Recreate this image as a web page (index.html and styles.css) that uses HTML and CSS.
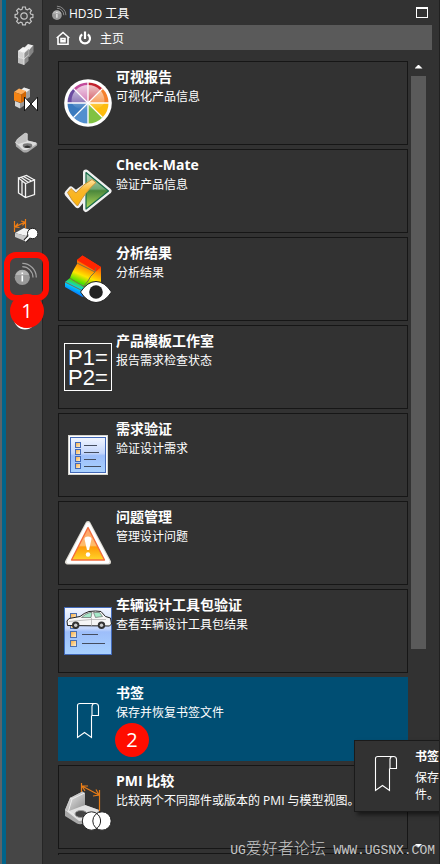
FILE: index.html
```html
<!DOCTYPE html>
<html lang="zh-CN">

<head>
    <meta charset="UTF-8">
    <meta name="viewport" content="width=device-width, initial-scale=1">
    <title>HD3D 工具</title>
    <link rel="stylesheet" href="styles.css">
</head>

<body>

    <!-- 公用图形 -->
    <svg class="defs" width="0" height="0" aria-hidden="true">
        <defs>
            <linearGradient id="metal" x1="0" y1="0" x2="1" y2="1">
                <stop offset="0" stop-color="#f4f4f4" />
                <stop offset="1" stop-color="#8c8c8c" />
            </linearGradient>
            <linearGradient id="sheet" x1="0" y1="0" x2="0" y2="1">
                <stop offset="0" stop-color="#f2f6ff" />
                <stop offset="0.45" stop-color="#c4d6fb" />
                <stop offset="0.52" stop-color="#9dbefa" />
                <stop offset="1" stop-color="#a9d2ff" />
            </linearGradient>
            <linearGradient id="box" x1="0" y1="0" x2="1" y2="1">
                <stop offset="0" stop-color="#f6a93b" />
                <stop offset="1" stop-color="#fff3d8" />
            </linearGradient>
            <symbol id="info" viewBox="0 0 28 28">
                <circle cx="12.3" cy="17.3" r="7.6" fill="#999" />
                <path d="M5.5 15a7.2 7.2 0 0 1 13.6 0z" fill="#b4b4b4" />
                <path d="M12.3 15.6v5.8M12.3 12.4v1.7" stroke="#fff" stroke-width="1.6" />
                <path d="M12.3 3.4A14 14 0 0 1 26.3 17.4M12.3 6.6A10.8 10.8 0 0 1 23 17.4" fill="none" stroke="#a2a2a2" stroke-width="1.2" />
            </symbol>
            <symbol id="bookmark" viewBox="0 0 48 48">
                <path d="M27.5 20.5v22l-7-5-7 5v-32q0-2 2.500-2h15.500q3 0 3 3v9h-6.500v-9q0-3 3-3" fill="none" stroke="#fff" stroke-width="1.1" />
            </symbol>
        </defs>
    </svg>

    <div class="app">
        <!-- 资源条 -->
        <nav class="sidebar">
            <button class="side_btn first" aria-label="设置">
                <svg width="20" height="20" viewBox="0 0 20 20" fill="none" stroke="#c4c4c4" stroke-width="1.200">
                    <path d="M8.600 1h2.800l.5 2.300 1.500.6 2-1.300 2 2-1.300 2 .6 1.500 2.200.5v2.800l-2.200.5-.6 1.500 1.300 2-2 2-2-1.300-1.500.6-.5 2.200H8.600l-.5-2.200-1.500-.6-2 1.300-2-2 1.300-2-.6-1.500-2.200-.5V8.600l2.200-.5.6-1.500-1.300-2 2-2 2 1.300 1.500-.6z" />
                    <circle cx="10" cy="10" r="3.200" />
                </svg>
            </button>
            <button class="side_btn" aria-label="装配导航器">
                <svg width="28" height="28" viewBox="0 0 28 28">
                    <path d="M14 8l4-4 5.500 1.500-4 4.500z" fill="#eee" />
                    <path d="M19.500 10l4-4.500v6.500l-4 5z" fill="#858585" />
                    <path d="M14 8l5.500 2v7L14 15z" fill="#b8b8b8" />
                    <path d="M8 11l5-4 5.500 2-4.500 4z" fill="#f4f4f4" />
                    <path d="M14 13l4.500-4v6.500L14 19z" fill="#909090" />
                    <path d="M8 11l6 2v6l-6-2z" fill="#d2d2d2" />
                    <path d="M8 17l6 2v6l-6-2z" fill="#c2c2c2" />
                    <path d="M14 19l4.500-4V21L14 25z" fill="#8a8a8a" />
                    <path d="M8 11l6 2 4.500-4M14 13v12M8 17l6 2 4.500-4" fill="none" stroke="#f4f4f4" stroke-width=".7" />
                </svg>
            </button>
            <button class="side_btn" aria-label="约束导航器">
                <svg width="28" height="28" viewBox="0 0 28 28">
                    <path d="M11 6l3-2.500 6 2V13l-5 3z" fill="#a0a0a0" />
                    <path d="M11 6l3-2.500 6 2-4 3z" fill="#eee" />
                    <path d="M5 17l5 2v5.500L5 22z" fill="#d5d5d5" />
                    <path d="M10 19l5-3v5l-5 3.500z" fill="#999" />
                    <path d="M4 8l5-3.500 7 2.500-4.500 3.500z" fill="#ffae5b" />
                    <path d="M4 8l7.500 2.500V19L4 16.500z" fill="#f58414" />
                    <path d="M11.500 10.500L16 7v8.500L11.500 19z" fill="#d46600" />
                    <path d="M14.500 13v14l6.500-7zM27.500 13v14L21 20z" fill="#fff" stroke="#151515" />
                </svg>
            </button>
            <button class="side_btn" aria-label="部件导航器">
                <svg width="28" height="28" viewBox="0 0 28 28">
                    <path d="M5.500 14.500l10-2.500L26 14.500q2 1 1 3l-9 6.500q-3 1-5 0l-7-5.500z" fill="#a9a9a9" />
                    <path d="M5.500 14.500l10-2.500L26 14.500q1 1 0 2l-8.500 5q-2.500 1-5 0z" fill="#dcdcdc" />
                    <path d="M5.500 14.500l2-3.500 7-5.500q1.500-.8 2.800.3v8l-9 2.700z" fill="#c2c2c2" stroke="#ededed" stroke-width=".6" />
                    <ellipse cx="17.500" cy="17.700" rx="4.800" ry="2.400" fill="#777" />
                    <path d="M14 19q3-3 7 0-3.500 2-7 0z" fill="#303030" />
                </svg>
            </button>
            <button class="side_btn" aria-label="重用库">
                <svg width="28" height="28" viewBox="0 0 28 28" fill="none" stroke="#f4f4f4" stroke-width="1.300">
                    <path d="M8.500 6v15l7 4.500 9-3V8l-9 3.500zM15.500 11.500v14M8.500 6l8-2.500 8 4.500M11 5.200l7 5M13.500 4.500l8 4.500M12 9v14" />
                </svg>
            </button>
            <button class="side_btn" aria-label="视图管理器">
                <svg width="28" height="28" viewBox="0 0 28 28">
                    <path d="M5 17l9-5 10 3-8 5z" fill="#f2f2f2" />
                    <path d="M5 17l11 3v5.500L5 21z" fill="#c9c9c9" />
                    <path d="M16 20l8-5v4l-8 6.500z" fill="#999" />
                    <path d="M4.500 5v11M15.500 3v9M5 11l10-5M8 7.500L5 11l4.500.5M11 5l4 1-2.500 3.500" fill="none" stroke="#ef7d14" stroke-width="1.200" />
                    <path d="M15 25l5-5" stroke="#202020" stroke-width="4" />
                    <circle cx="22.700" cy="17.500" r="5.200" fill="#fff" stroke="#202020" />
                    <path d="M15 25l5-5" stroke="#fff" stroke-width="2" />
                </svg>
            </button>
            <button class="side_btn marked" aria-label="HD3D 工具">
                <svg width="28" height="28">
                    <use href="#info" />
                </svg>
            </button>
            <button class="side_btn" aria-label="历史记录">
                <svg width="28" height="28" viewBox="0 0 28 28" fill="none" stroke="#fff" stroke-width="2">
                    <circle cx="15" cy="14.500" r="10" />
                    <path d="M15 8v7h5" />
                </svg>
                <span class="step step1">1</span>
            </button>
        </nav>

        <main class="panel">
            <header class="title">
                <svg width="18" height="18">
                    <use href="#info" />
                </svg>
                <h1>HD3D 工具</h1>
                <button class="max_btn" aria-label="最大化"></button>
            </header>

            <div class="toolbar">
                <button aria-label="主页">
                    <svg width="14" height="14" viewBox="0 0 14 14" fill="none" stroke="#fff" stroke-width="1.600">
                        <path d="M.7 7L7 1.500 13.300 7M2 6v7.200h10V6M5 10.800V7.500h4v3.300zM4.500 9.500h5" />
                    </svg>
                </button>
                <button aria-label="退出">
                    <svg width="14" height="14" viewBox="0 0 14 14" fill="none" stroke="#fff" stroke-width="2.200">
                        <path d="M4.200 3.300a5 5 0 1 0 5.600 0M7 .5V8" />
                    </svg>
                </button>
                <span>主页</span>
            </div>

            <div class="content">
                <div class="list">
                    <button class="card">
                        <svg width="48" height="48" viewBox="0 0 48 48">
                            <defs>
                                <linearGradient id="shine" x1="0" y1="0" x2="0" y2="1">
                                    <stop offset="0" stop-color="#fff" stop-opacity=".75" />
                                    <stop offset=".65" stop-color="#fff" stop-opacity=".3" />
                                    <stop offset="1" stop-color="#fff" stop-opacity="0" />
                                </linearGradient>
                            </defs>
                            <circle cx="24" cy="24" r="23.800" fill="#fff" />
                            <path d="M24 24V3.500a20.500 20.500 0 0 1 14.500 6z" fill="#c2202c" />
                            <path d="M24 24L38.500 9.500A20.500 20.500 0 0 1 44.500 24z" fill="#f5802c" />
                            <path d="M24 24h20.500a20.500 20.500 0 0 1-6 14.500z" fill="#fdbc0e" />
                            <path d="M24 24l14.500 14.500a20.500 20.500 0 0 1-14.500 6z" fill="#80c242" />
                            <path d="M24 24v20.500a20.500 20.500 0 0 1-14.500-6z" fill="#528fcf" />
                            <path d="M24 24L9.500 38.500a20.500 20.500 0 0 1-6-14.500z" fill="#397abf" />
                            <path d="M24 24H3.500a20.500 20.500 0 0 1 6-14.500z" fill="#6a4ca0" />
                            <path d="M24 24L9.500 9.500a20.500 20.500 0 0 1 14.500-6z" fill="#c24a9b" />
                            <path d="M24 6c9.500 0 16.500 7 16.500 16 0 5-7 9-16.500 9S7.500 27 7.500 22C7.500 13 14.500 6 24 6z" fill="url(#shine)" />
                            <path d="M24 3v42M3 24h42" stroke="#fff" stroke-width="1.800" opacity=".75" />
                            <path d="M9.500 9.500l29 29M38.500 9.500l-29 29" stroke="#fff" stroke-width="1.200" />
                        </svg>
                        <span class="text"><b>可视报告</b><span>可视化产品信息</span></span>
                    </button>

                    <button class="card">
                        <svg width="48" height="48" viewBox="0 0 48 48" stroke-linejoin="round">
                            <defs>
                                <linearGradient id="go" x1="0" y1="0" x2="0" y2="1">
                                    <stop offset="0" stop-color="#b8d2c0" />
                                    <stop offset=".45" stop-color="#6fa872" />
                                    <stop offset=".5" stop-color="#4b873c" />
                                    <stop offset="1" stop-color="#b5dc57" />
                                </linearGradient>
                                <linearGradient id="tick" x1="0" y1="0" x2="0" y2="1">
                                    <stop offset="0" stop-color="#ffe7a6" />
                                    <stop offset=".4" stop-color="#f8b62d" />
                                    <stop offset="1" stop-color="#fbb30c" />
                                </linearGradient>
                            </defs>
                            <path d="M22 5.500L44.500 24 22 42zM3.500 26.500L7 22.500l5 4L29 14l3 2-18.500 22z" fill="#fff" stroke="#f0f0f0" stroke-width="6" />
                            <path d="M22 5.500L44.500 24 22 42z" fill="url(#go)" stroke="#176b49" stroke-width="1.200" />
                            <path d="M3.500 25.500L7 21.500l5 4.500q7-9 16-13.500l4 3Q22 24 13.500 39q-5-4-10-13.500z" fill="url(#tick)" stroke="#cb963c" />
                        </svg>
                        <span class="text"><b>Check-Mate</b><span>验证产品信息</span></span>
                    </button>

                    <button class="card">
                        <svg width="48" height="48" viewBox="0 0 48 48">
                            <defs>
                                <linearGradient id="rain" gradientUnits="userSpaceOnUse" x1="27" y1="6" x2="13" y2="40">
                                    <stop offset="0" stop-color="#ff2500" />
                                    <stop offset=".22" stop-color="#ff8a00" />
                                    <stop offset=".45" stop-color="#ffe500" />
                                    <stop offset=".66" stop-color="#4be000" />
                                    <stop offset=".82" stop-color="#00cfff" />
                                    <stop offset="1" stop-color="#0870ff" />
                                </linearGradient>
                            </defs>
                            <path d="M13 5l5.500-4.500L37 12v16L18.500 42 1 32v-5l5-4q2-6 7-14z" fill="url(#rain)" />
                            <path d="M13 5l5.500-4.500L37 12l-5 4.500z" fill="#ff2500" />
                            <path d="M13 8l18 9 1-4.500M31 17q-5 4-7 9l-5 6M6 23q2 2 17 10M1 27l18 9v5M19 36l4-3" fill="none" stroke="#7b7046" />
                            <path d="M16.500 37q7-10.500 15.500-10.500T47.500 37q-7 10.500-15.500 10.500T16.500 37z" fill="#fff" stroke="#202020" />
                            <circle cx="32" cy="37" r="6.800" fill="#222" />
                        </svg>
                        <span class="text"><b>分析结果</b><span>分析结果</span></span>
                    </button>

                    <button class="card">
                        <span class="param">P1=<br>P2=</span>
                        <span class="text"><b>产品模板工作室</b><span>报告需求检查状态</span></span>
                    </button>

                    <button class="card">
                        <svg width="48" height="48" viewBox="0 0 48 48">
                            <rect x="4" y="4" width="40" height="40" fill="#d5d5cf" />
                            <rect x="5" y="5" width="38" height="38" fill="#fff" />
                            <rect x="6.500" y="6.500" width="35" height="35" fill="url(#sheet)" stroke="#4269b8" />
                            <g fill="url(#box)" stroke="#4269b8">
                                <rect x="11.500" y="11.500" width="5" height="5" />
                                <rect x="11.500" y="18.500" width="5" height="5" />
                                <rect x="11.500" y="25.500" width="5" height="5" />
                                <rect x="11.500" y="32.500" width="5" height="5" />
                            </g>
                            <path d="M20 14.500h13M20 21.500h15M20 28.500h12M20 35.500h17" stroke="#444d5f" />
                        </svg>
                        <span class="text"><b>需求验证</b><span>验证设计需求</span></span>
                    </button>

                    <button class="card">
                        <svg width="48" height="48" viewBox="0 0 48 48" stroke-linejoin="round">
                            <defs>
                                <linearGradient id="warn" x1="0" y1="0" x2="0" y2="1">
                                    <stop offset="0" stop-color="#ffa16b" />
                                    <stop offset=".55" stop-color="#ffbd6a" />
                                    <stop offset=".6" stop-color="#ff9c0a" />
                                    <stop offset="1" stop-color="#ffd52a" />
                                </linearGradient>
                            </defs>
                            <path d="M24 4.500L3.500 43h41z" fill="#fff" stroke="#dedbd3" stroke-width="5" />
                            <path d="M24 5.500L4.500 42.500h39z" fill="#fff" stroke="#fff" stroke-width="4" />
                            <path d="M24 8.500L7.500 41h33z" fill="url(#warn)" stroke="#f36c3c" stroke-width="1.400" />
                            <path d="M20.500 20q0-2.500 3.500-2.500t3.500 2.500L25 31h-2z" fill="#fff" />
                            <circle cx="24" cy="35.500" r="2.200" fill="#fff" />
                        </svg>
                        <span class="text"><b>问题管理</b><span>管理设计问题</span></span>
                    </button>

                    <button class="card">
                        <svg width="48" height="48" viewBox="0 0 48 48">
                            <rect x=".5" y=".5" width="47" height="47" fill="url(#sheet)" stroke="#4269b8" />
                            <g fill="url(#box)" stroke="#4c6faf">
                                <rect x="6.500" y="6.500" width="6" height="6" />
                                <rect x="6.500" y="15.500" width="6" height="6" />
                                <rect x="6.500" y="24.500" width="6" height="6" />
                                <rect x="6.500" y="33.500" width="6" height="6" />
                            </g>
                            <path d="M18 27.500h16M18 36.500h23" stroke="#444d5f" />
                            <path d="M3.500 18.500L3 14l2-2.500 11-2q4-3.500 9-5 7-1 12 0l4.500 5 5 1.500 1 6-2 2z" fill="#f6f6f6" stroke="#222" />
                            <path d="M17.500 10.500q4-4 8.500-5l2 0-1 5zM29.500 5.500h6l3 4-7 1z" fill="#a6e8c9" stroke="#555" stroke-width=".6" />
                            <path d="M5 14.500l22-2h15M27.500 11v8" fill="none" stroke="#aaa" stroke-width=".7" />
                            <circle cx="11.700" cy="18.300" r="3.700" fill="#333" />
                            <circle cx="11.700" cy="18.300" r="1.700" fill="#ccc" />
                            <circle cx="37.500" cy="18.300" r="3.700" fill="#333" />
                            <circle cx="37.500" cy="18.300" r="1.700" fill="#ccc" />
                        </svg>
                        <span class="text"><b>车辆设计工具包验证</b><span>查看车辆设计工具包结果</span></span>
                    </button>

                    <button class="card active">
                        <svg width="48" height="48">
                            <use href="#bookmark" />
                        </svg>
                        <span class="text"><b>书签</b><span>保存并恢复书签文件</span></span>
                        <span class="step step2">2</span>
                    </button>

                    <button class="card">
                        <svg width="48" height="48" viewBox="0 0 48 48">
                            <path d="M1 27l5-12 12.500-6.500 2.500 2V22l14 5v9l-17 5q-3 .5-5-.5L1 33z" fill="#a8a8a8" />
                            <path d="M1 27l8-2 12-3 14 5-8 10-12 1z" fill="#e1e1e1" />
                            <path d="M6 15l12.500-6.500 2.500 2V22L5 28l-4-1z" fill="url(#metal)" />
                            <path d="M6 15l2 1 12.500-6M8 16L4.500 28l10 7" fill="none" stroke="#eee" />
                            <ellipse cx="17" cy="31" rx="6" ry="3.500" fill="#444" stroke="#999" />
                            <path d="M17.500 0v9M35.500 7v21M18 3l17 9M24 3l-6 0 3 5M32 6.500l3 5.500-6 1" fill="none" stroke="#e77c17" stroke-width="1.200" />
                            <circle cx="27.500" cy="38" r="9.200" fill="#fff" stroke="#222" />
                            <circle cx="38" cy="38" r="9.200" fill="#fff" stroke="#222" />
                            <path d="M32.700 30.500a9.200 9.200 0 0 1 0 15" fill="none" stroke="#222" />
                        </svg>
                        <span class="text"><b>PMI 比较</b><span>比较两个不同部件或版本的 PMI 与模型视图。</span></span>
                    </button>

                    <div class="card_more"></div>
                </div>

                <div class="scrollbar">
                    <button class="arrow up" aria-label="向上滚动"></button>
                    <div class="track">
                        <div class="thumb"></div>
                    </div>
                    <button class="arrow down" aria-label="向下滚动"></button>
                </div>
            </div>
        </main>

        <!-- 悬停提示 -->
        <div class="tooltip" role="tooltip">
            <svg width="48" height="48">
                <use href="#bookmark" />
            </svg>
            <div>
                <b>书签</b>
                <p>保存<br>件。</p>
            </div>
        </div>

        <div class="watermark"><span>UG</span>爱好者论坛<span> WWW.UGSNX.COM</span></div>
    </div>

</body>

</html>
```
FILE: styles.css
```css
*,
*::before,
*::after {
    box-sizing: border-box;
}

body {
    margin: 0;
    background: #323232;
    color: #fff;
    font-family: "Open Sans", "Noto Sans CJK SC", sans-serif;
    font-size: 12px;
}

button {
    margin: 0;
    padding: 0;
    border: 0;
    background: none;
    color: inherit;
    font: inherit;
    cursor: pointer;
}

svg {
    display: block;
    flex: none;
}

.defs {
    position: absolute;
}

.app {
    position: relative;
    display: flex;
    height: 100vh;
    overflow: hidden;
    border-right: 1px solid #202020;
}

/* 左侧资源条 */
.sidebar {
    flex: none;
    display: flex;
    flex-direction: column;
    width: 43px;
    background: #464646;
    border-left: 2px solid #5c6468;
    border-right: 1px solid #262626;
    box-shadow: inset 4px 0 #00648b;
    padding-left: 4px;
}

.side_btn {
    position: relative;
    display: flex;
    align-items: center;
    justify-content: center;
    height: 44px;
}

.side_btn.first {
    height: 32px;
}

.marked::after {
    content: "";
    position: absolute;
    top: 0;
    left: -2px;
    width: 45px;
    height: 49px;
    border: 6px solid #ff0d00;
    border-radius: 12px;
    z-index: 1;
}

.step {
    position: absolute;
    z-index: 2;
    width: 34px;
    height: 34px;
    border-radius: 50%;
    background: #ff0d00;
    font-size: 20px;
    line-height: 34px;
    text-align: center;
}

.step1 {
    top: -2px;
    left: 4px;
}

.step2 {
    top: 45px;
    left: 56px;
}

/* 主面板 */
.panel {
    flex: 1;
    min-width: 0;
    display: flex;
    flex-direction: column;
    padding: 0 7px 9px 6px;
}

.title {
    display: flex;
    align-items: center;
    gap: 2px;
    height: 25px;
}

.title h1 {
    flex: 1;
    margin: 0;
    font-size: 12px;
    font-weight: normal;
}

.max_btn {
    width: 12px;
    height: 11px;
    margin-right: 4px;
    border: 1px solid #fff;
    border-top-width: 2px;
}

.toolbar {
    display: flex;
    align-items: center;
    gap: 8px;
    height: 25px;
    padding-left: 7px;
    background: #5a5a5a;
}

.content {
    flex: 1;
    min-height: 0;
    display: flex;
    gap: 3px;
    padding: 11px 6px 0 9px;
}

.list {
    flex: 1;
    min-width: 0;
    display: flex;
    flex-direction: column;
    gap: 4px;
    overflow: hidden;
}

.card {
    flex: none;
    position: relative;
    display: flex;
    align-items: flex-start;
    gap: 4px;
    height: 84px;
    padding: 5px 0 0 5px;
    border: 1px solid #161616;
    text-align: left;
}

.card svg {
    margin-top: 12px;
    overflow: visible;
}

.card.active {
    background: #004e73;
    border-color: #004e73;
}

.card .text {
    display: flex;
    flex-direction: column;
    line-height: 20px;
    white-space: nowrap;
}

.card b {
    font-size: 14px;
}

.card_more {
    flex: none;
    height: 84px;
    border: 1px solid #161616;
}

.param {
    flex: none;
    width: 48px;
    height: 48px;
    margin-top: 12px;
    padding: 4px 0 0 3px;
    border: 1px solid #fff;
    font-family: "Liberation Sans", Arial, sans-serif;
    font-size: 22px;
    line-height: 20px;
}

/* 滚动条 */
.scrollbar {
    flex: none;
    display: flex;
    flex-direction: column;
    width: 15px;
}

.arrow {
    display: flex;
    align-items: center;
    justify-content: center;
    height: 15px;
    padding-bottom: 4px;
}

.arrow::before {
    content: "";
    width: 8px;
    height: 4px;
    background: #fff;
}

.up::before {
    clip-path: polygon(50% 0, 100% 100%, 0 100%);
}

.down::before {
    clip-path: polygon(0 0, 100% 0, 50% 100%);
}

.track {
    flex: 1;
}

.thumb {
    height: 75%;
    background: #5a5a5a;
}

/* 提示框 */
.tooltip {
    position: absolute;
    right: -1px;
    bottom: 52px;
    display: flex;
    gap: 5px;
    width: 86px;
    height: 72px;
    padding: 7px 0 0 7px;
    background: #323232;
    border: 1px solid #1a1a1a;
    border-right: 0;
    box-shadow: 3px 3px 4px rgba(0, 0, 0, 0.5);
    line-height: 17px;
    white-space: nowrap;
}

.tooltip p {
    margin: 4px 0 0;
}

.watermark {
    position: absolute;
    right: 4px;
    bottom: 3px;
    color: #c8c8c8;
    font-family: "Liberation Mono", "Noto Sans CJK SC", monospace;
    font-size: 16px;
    font-weight: 300;
    line-height: 20px;
    white-space: pre;
}

.watermark span {
    font-size: 13px;
}
```
